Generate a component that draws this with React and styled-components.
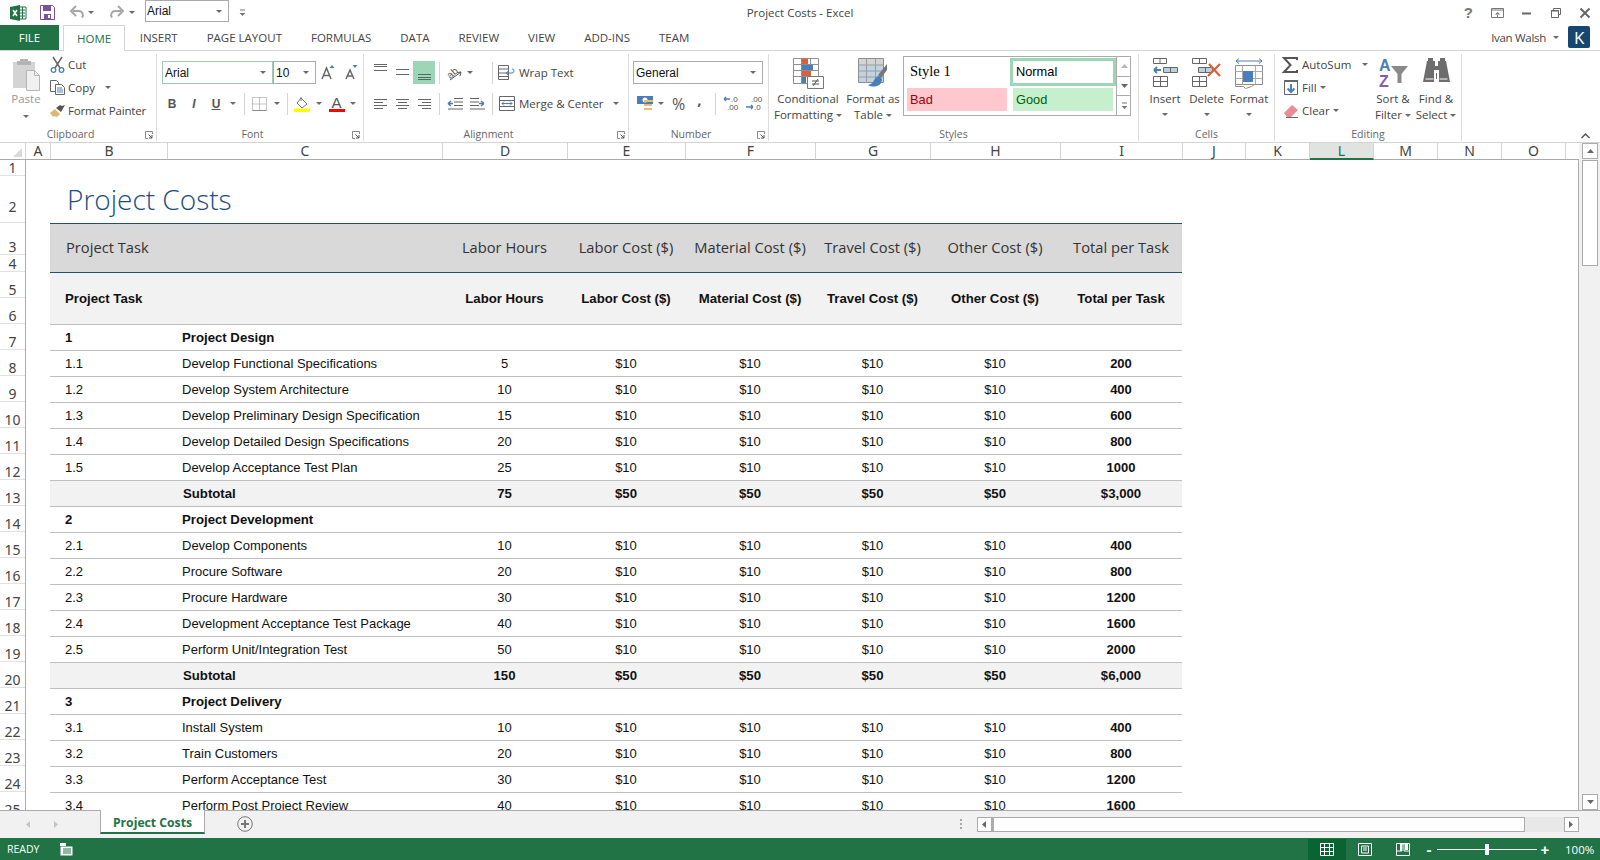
import React from "react";
import styled, { createGlobalStyle } from "styled-components";

const UI = `"Open Sans", "Noto Sans", sans-serif`;
const GREEN = "#217346";
const BLUE = "#4a7ebb";
const GREY = "#6a6a6a";
const COLS = "117px 275px 125px 118px 130px 115px 130px 122px";

const GlobalStyle = createGlobalStyle`
  html, body { margin: 0; padding: 0; background: #fff; }
  body { font-family: ${UI}; color: #444; overflow: hidden; }
  * { box-sizing: border-box; }
`;

/* ---------- shell ---------- */
const Window = styled.div`
  width: 1600px;
  height: 860px;
  display: flex;
  flex-direction: column;
  overflow: hidden;
`;

const TitleBar = styled.div`
  height: 25px;
  display: grid;
  grid-template-columns: 1fr auto 1fr;
  align-items: center;
`;
const Quick = styled.div`
  display: flex;
  align-items: center;
  padding-left: 10px;
`;
const QuickFont = styled.div`
  width: 84px;
  height: 22px;
  margin: -3px 0 0 0;
  border: 1px solid #ababab;
  display: flex;
  align-items: center;
  justify-content: space-between;
  padding: 0 6px 0 1px;
  font: 12px "Liberation Sans", sans-serif;
  color: #111;
`;
const WindowTitle = styled.div`
  font-size: 11.5px;
  color: #444;
`;
const WindowButtons = styled.div`
  display: flex;
  justify-content: flex-end;
  align-items: center;
  padding-right: 10px;
`;
const HelpMark = styled.span`
  font: bold 15px "Liberation Sans", sans-serif;
  color: #777;
  margin-right: 18px;
`;

const TabStrip = styled.div`
  height: 26px;
  display: flex;
  align-items: stretch;
  border-bottom: 1px solid #d4d4d4;
`;
const FileTab = styled.div`
  width: 59px;
  height: 25px;
  background: ${GREEN};
  color: #fff;
  font-size: 11.5px;
  display: flex;
  align-items: center;
  justify-content: center;
  margin-right: 4px;
`;
const Tab = styled.div`
  height: ${(p) => (p.$active ? "26px" : "25px")};
  padding: 0 ${(p) => (p.$active ? "13px" : "14.5px")} 1px;
  display: flex;
  align-items: center;
  font-size: 11.5px;
  color: ${(p) => (p.$active ? GREEN : "#444")};
  background: #fff;
  border: ${(p) => (p.$active ? "1px solid #d4d4d4" : "none")};
  border-bottom: none;
`;
const User = styled.div`
  margin-left: auto;
  display: flex;
  align-items: center;
  font-size: 11.5px;
  letter-spacing: -0.3px;
  padding: 0 10px 1px 0;
`;
const Avatar = styled.div`
  width: 22px;
  height: 22px;
  border-radius: 2px;
  background: #17466f;
  color: #fff;
  font-size: 17px;
  display: flex;
  align-items: center;
  justify-content: center;
  margin-left: 9px;
`;

/* ---------- ribbon ---------- */
const Ribbon = styled.div`
  height: 92px;
  display: flex;
  position: relative;
  border-bottom: 1px solid #d4d4d4;
  padding: 3px 0 1px;
`;
const Group = styled.section`
  width: ${(p) => p.$w}px;
  flex: none;
  position: relative;
  border-right: 1px solid #dcdcdc;
  padding-left: ${(p) => p.$pad || 0}px;
  display: flex;
  flex-direction: column;
`;
const GroupBody = styled.div`
  flex: 1;
  display: flex;
  align-items: flex-start;
`;
const GroupLabel = styled.div`
  position: absolute;
  left: 0;
  right: ${(p) => (p.$launch ? "15px" : "0")};
  bottom: 0;
  height: 14px;
  line-height: 14px;
  text-align: center;
  font-size: 10.5px;
  color: #666;
`;
const Launcher = styled.span`
  position: absolute;
  right: 3px;
  bottom: 2px;
  line-height: 0;
`;
const Stack = styled.div`
  display: flex;
  flex-direction: column;
  width: ${(p) => (p.$w ? `${p.$w}px` : "auto")};
  margin-left: ${(p) => p.$ml || 0}px;
  margin-top: ${(p) => p.$mt || 0}px;
`;
const ToolRow = styled.div`
  height: 23px;
  margin-top: ${(p) => p.$mt || 0}px;
  display: flex;
  align-items: center;
`;
const Slot = styled.span`
  width: ${(p) => p.$w}px;
  height: 23px;
  flex: none;
  display: flex;
  align-items: center;
  justify-content: center;
  margin-left: ${(p) => p.$ml || 0}px;
  background: ${(p) => (p.$on ? "#9fd5b7" : "transparent")};
`;
const Divider = styled.span`
  width: 1px;
  height: 22px;
  background: #d4d4d4;
`;
const Caret = styled.span`
  display: inline-block;
  flex: none;
  width: 0;
  height: 0;
  border-left: 3px solid transparent;
  border-right: 3px solid transparent;
  border-top: 3px solid ${GREY};
  margin-left: ${(p) => p.$ml || 0}px;
  margin-top: ${(p) => p.$mt || 0}px;
  vertical-align: middle;
`;
const Select = styled.div`
  width: ${(p) => p.$w}px;
  height: 23px;
  flex: none;
  border: 1px solid ${(p) => (p.$on ? "#9fc9b1" : "#ababab")};
  padding: 0 6px 0 2px;
  display: flex;
  align-items: center;
  justify-content: space-between;
  font: 12px "Liberation Sans", sans-serif;
  color: #111;
`;
const FontFace = styled.span`
  font: ${(p) => (p.$i ? "italic bold" : "bold")} 12px "Liberation Sans", sans-serif;
  color: #555;
  text-decoration: ${(p) => (p.$u ? "underline" : "none")};
`;
const ColourLetter = styled.span`
  display: flex;
  flex-direction: column;
  align-items: center;
  font: 15px/13px "Liberation Sans", sans-serif;
  color: #555;
  &::after {
    content: "";
    width: 16px;
    height: 3px;
    background: #ff0000;
  }
`;
const Glyph = styled.span`
  font: ${(p) => p.$size || 15}px "Open Sans", sans-serif;
  font-weight: ${(p) => p.$weight || 400};
  color: #555;
  margin-bottom: ${(p) => p.$mb || 0}px;
`;
const BigButton = styled.div`
  width: ${(p) => p.$w}px;
  flex: none;
  margin-left: ${(p) => p.$ml || 0}px;
  display: flex;
  flex-direction: column;
  align-items: center;
  font-size: 11.5px;
  line-height: 16px;
  color: ${(p) => (p.$dim ? "#9a9a9a" : "#444")};
  white-space: nowrap;
`;
const BigIcon = styled.div`
  height: 37px;
  padding-top: 4px;
  display: flex;
  justify-content: center;
`;
const ListButton = styled.div`
  height: 23px;
  display: flex;
  align-items: center;
  font-size: 11.5px;
  letter-spacing: ${(p) => p.$tight || 0}px;
  color: #444;
  white-space: nowrap;
`;
const ListIcon = styled.span`
  width: ${(p) => p.$w || 15}px;
  flex: none;
  margin-right: ${(p) => p.$gap || 4}px;
  display: flex;
  justify-content: center;
`;
const WideButton = styled.div`
  display: flex;
  align-items: center;
  font-size: 11.5px;
  color: #444;
  white-space: nowrap;
`;
const Gallery = styled.div`
  width: 228px;
  height: 60px;
  margin-top: 2px;
  border: 1px solid #ababab;
  display: flex;
`;
const StyleGrid = styled.div`
  flex: 1;
  padding: 1px 0 0 3px;
  display: grid;
  grid-template-columns: 100px 106px;
  grid-template-rows: 28px 23px;
  column-gap: 3px;
  row-gap: 2px;
`;
const StyleCell = styled.div`
  font: ${(p) => (p.$serif ? `14.5px "Liberation Serif", serif` : `12.8px "Liberation Sans", sans-serif`)};
  background: ${(p) => p.$bg || "transparent"};
  color: ${(p) => p.$fg || "#000"};
  border: ${(p) => (p.$framed ? "3px solid #9fd5b7" : "none")};
  margin: ${(p) => (p.$inset ? "0 3px" : "0")};
  padding: 0 0 1px 3px;
  display: flex;
  align-items: center;
`;
const GalleryScroll = styled.div`
  width: 15px;
  flex: none;
  display: flex;
  flex-direction: column;
  border-left: 1px solid #ababab;
`;
const GalleryStep = styled.div`
  flex: 1;
  display: flex;
  align-items: center;
  justify-content: center;
  border-bottom: ${(p) => (p.$last ? "none" : "1px solid #ababab")};
`;
const Collapse = styled.span`
  position: absolute;
  right: 10px;
  bottom: 3px;
  line-height: 0;
`;

/* ---------- sheet ---------- */
const ColumnBar = styled.div`
  height: 17px;
  display: flex;
`;
const ColumnTrack = styled.div`
  width: 1579px;
  flex: none;
  display: flex;
  border-bottom: 1px solid #ababab;
`;
const ScrollCap = styled.div`
  flex: 1;
  background: #f1f1f1;
  padding-left: 3px;
`;
const Corner = styled.div`
  width: 26px;
  flex: none;
  display: flex;
  align-items: flex-end;
  justify-content: flex-end;
  padding: 0 3px 2px 0;
  border-right: 1px solid #d4d4d4;
`;
const ColumnHead = styled.div`
  width: ${(p) => p.$w}px;
  flex: none;
  text-align: center;
  font: 14px/16px "Noto Sans", sans-serif;
  color: ${(p) => (p.$on ? GREEN : "#444")};
  background: ${(p) => (p.$on ? "#e1e3e1" : "#fff")};
  border-right: 1px solid #d4d4d4;
  border-bottom: ${(p) => (p.$on ? `2px solid ${GREEN}` : "none")};
  height: ${(p) => (p.$on ? "17px" : "16px")};
`;
const SheetArea = styled.div`
  height: 651px;
  display: flex;
  overflow: hidden;
  border-bottom: 1px solid #ababab;
`;
const RowHeads = styled.div`
  width: 26px;
  flex: none;
  border-right: 1px solid #ababab;
`;
const RowHead = styled.div`
  height: ${(p) => p.$h}px;
  display: flex;
  align-items: flex-end;
  justify-content: center;
  padding-bottom: ${(p) => p.$pb || 0}px;
  font: 14px/14px "Noto Sans", sans-serif;
  color: #444;
  border-bottom: 1px solid #e1e1e1;
`;
const Canvas = styled.div`
  width: 1553px;
  flex: none;
  padding-left: 24px;
  border-right: 1px solid #ababab;
  overflow: hidden;
`;
const SheetTitle = styled.h1`
  margin: 0;
  height: 63px;
  padding: 15px 0 0 17px;
  font: 300 28px/48px "Open Sans", sans-serif;
  color: #1a4e7e;
`;
const Table = styled.div`
  width: 1132px;
`;
const TitleBand = styled.div`
  height: 50px;
  padding-bottom: 2px;
  display: grid;
  grid-template-columns: ${COLS};
  align-items: center;
  background: #d9d9d9;
  border-top: 1px solid #1f4e79;
  border-bottom: 1px solid #1f4e79;
  color: #333;
  font: 400 14.7px "Open Sans", sans-serif;
`;
const HeadBand = styled.div`
  height: 52px;
  display: grid;
  grid-template-columns: ${COLS};
  align-items: center;
  background: #f2f2f2;
  border-bottom: 1px solid #bfbfbf;
  color: #111;
  font: bold 13.2px "Liberation Sans", sans-serif;
`;
const Row = styled.div`
  height: 26px;
  display: grid;
  grid-template-columns: ${COLS};
  align-items: center;
  background: ${(p) => (p.$shade ? "#f2f2f2" : "#fff")};
  border-bottom: 1px solid #bfbfbf;
  color: #111;
  font: ${(p) => (p.$bold ? "bold 13.2px" : "normal 13px")} "Liberation Sans", sans-serif;
`;
const Cell = styled.div`
  text-align: ${(p) => (p.$left ? "left" : "center")};
  padding-left: ${(p) => p.$pad || 0}px;
  grid-column: ${(p) => (p.$wide ? "span 2" : "auto")};
  font-weight: ${(p) => (p.$bold ? "bold" : "inherit")};
  white-space: nowrap;
`;
const VScroll = styled.div`
  flex: 1;
  background: #f1f1f1;
  padding-left: 3px;
  display: flex;
  flex-direction: column;
`;
const ScrollBtn = styled.div`
  width: ${(p) => p.$w || 16}px;
  height: ${(p) => p.$h || 16}px;
  flex: none;
  background: #fff;
  border: 1px solid #ababab;
  display: flex;
  align-items: center;
  justify-content: center;
`;
const VThumb = styled.div`
  width: 16px;
  height: 106px;
  background: #fff;
  border: 1px solid #ababab;
`;
const Filler = styled.span`
  flex: 1;
`;

/* ---------- bottom ---------- */
const SheetTabs = styled.div`
  height: 27px;
  background: #f1f1f1;
  display: flex;
  align-items: flex-start;
`;
const TabNav = styled.div`
  width: 100px;
  height: 27px;
  display: flex;
  align-items: center;
  padding-left: 26px;
  gap: 23px;
`;
const SheetTab = styled.div`
  width: 105px;
  height: 24px;
  margin-top: -1px;
  padding-top: 3px;
  background: #fff;
  border-left: 1px solid #ababab;
  border-right: 1px solid #ababab;
  border-bottom: 2px solid ${GREEN};
  color: ${GREEN};
  font-size: 12.2px;
  font-weight: 700;
  display: flex;
  align-items: center;
  justify-content: center;
`;
const AddSheet = styled.div`
  margin: 5px 0 0 32px;
  line-height: 0;
`;
const Dots = styled.div`
  margin: 8px 0 0 auto;
  width: 2px;
  height: 10px;
  background: repeating-linear-gradient(#a8a8a8 0 2px, transparent 2px 4px);
`;
const HScroll = styled.div`
  width: 602px;
  height: 15px;
  margin: 6px 21px 0 15px;
  background: #e8e8e8;
  display: flex;
`;
const HThumb = styled.div`
  width: 533px;
  background: #fff;
  border: 1px solid #ababab;
  border-left: 2px solid #ababab;
`;
const StatusBar = styled.div`
  height: 22px;
  background: ${GREEN};
  color: #fff;
  display: flex;
  align-items: center;
  font-size: 10.5px;
  padding-left: 7px;
`;
const ViewButton = styled.div`
  width: ${(p) => p.$w}px;
  height: 21px;
  margin-top: 1px;
  display: flex;
  align-items: center;
  justify-content: center;
  background: ${(p) => (p.$on ? "#0a6332" : "transparent")};
`;
const Zoom = styled.div`
  width: 100px;
  height: 1px;
  background: #fff;
  position: relative;
  margin: 0 1px;
`;
const ZoomThumb = styled.span`
  position: absolute;
  left: 48px;
  top: -5px;
  width: 4px;
  height: 11px;
  background: #fff;
`;
const ZoomSign = styled.span`
  font: bold 15px "Liberation Sans", sans-serif;
  color: #fff;
  width: ${(p) => p.$w}px;
  text-align: center;
`;
const ZoomLevel = styled.span`
  width: 35px;
  margin-left: 13px;
  font-size: 11.5px;
`;

/* ---------- drawings ---------- */
const Svg = ({ w, h, children }) => (
  <svg width={w} height={h} viewBox={`0 0 ${w} ${h}`} fill="none" style={{ display: "block", overflow: "visible" }}>
    {children}
  </svg>
);

const ExcelLogo = () => (
  <Svg w={17} h={16}>
    <path d="M9 2h7v12H9z" fill="#fff" stroke={GREEN} />
    <path d="M10 5h5M10 8h5M10 11h5M12.500 2v12" stroke={GREEN} />
    <path d="M0 2l10-2v16L0 14z" fill={GREEN} />
    <path d="M3 5l4 6M7 5l-4 6" stroke="#fff" strokeWidth="1.500" />
  </Svg>
);
const SaveIcon = () => (
  <Svg w={15} h={15}>
    <path d="M.5.5h12l2 2v12H.5z" stroke="#7d4f9e" fill="#fff" />
    <path d="M3 1h8v5H3z" fill="#7d4f9e" />
    <path d="M4 9h7v5.500H4z" fill="#7d4f9e" />
    <path d="M8 10h2v3H8z" fill="#fff" />
  </Svg>
);
const Undo = ({ flip }) => (
  <Svg w={15} h={13}>
    <g transform={flip ? "translate(15 0) scale(-1 1)" : undefined}>
      <path d="M3 5h6a4 4 0 0 1 3 6.500" stroke="#a6a6a6" strokeWidth="2" />
      <path d="M6 0L1 5l5 5" stroke="#a6a6a6" strokeWidth="2" />
    </g>
  </Svg>
);
const Customize = () => (
  <Svg w={7} h={8}>
    <path d="M1 1h5" stroke="#777" />
    <path d="M.5 4h6l-3 3z" fill="#777" />
  </Svg>
);
const RibbonOpts = () => (
  <Svg w={13} h={10}>
    <path d="M.5.5h12v9H.5z" stroke="#777" />
    <path d="M1 2h11" stroke="#777" />
    <path d="M6.500 4l-2.500 2.500h5zM6 6h1v3H6z" fill="#777" />
  </Svg>
);
const MinIcon = () => (
  <Svg w={9} h={9}>
    <path d="M0 5.500h9" stroke="#666" strokeWidth="2" />
  </Svg>
);
const RestoreIcon = () => (
  <Svg w={10} h={10}>
    <path d="M2.500 2.500v-2h7v6h-2M.5 2.500h7v7h-7z" stroke="#666" />
    <path d="M0 3h8" stroke="#666" />
  </Svg>
);
const CloseIcon = () => (
  <Svg w={10} h={10}>
    <path d="M.5.500l9 9M9.500.5l-9 9" stroke="#666" strokeWidth="2" />
  </Svg>
);
const PasteIcon = () => (
  <Svg w={28} h={33}>
    <path d="M1 4h22v26H1z" fill="#d4d4d4" />
    <path d="M8 1h8v2h3v4H5V3h3z" fill="#b5b5b5" />
    <path d="M14.500 12.500h8l5 5v15h-13z" fill="#f0f0f0" stroke="#b5b5b5" />
    <path d="M22.500 12.500v5h5" stroke="#b5b5b5" />
  </Svg>
);
const ScissorsIcon = () => (
  <Svg w={15} h={16}>
    <path d="M3 0l7 11M12 0L5 11" stroke="#666" strokeWidth="1.500" />
    <circle cx="3.500" cy="13" r="2.300" stroke={BLUE} strokeWidth="1.300" />
    <circle cx="11.500" cy="13" r="2.300" stroke={BLUE} strokeWidth="1.300" />
  </Svg>
);
const CopyIcon = () => (
  <Svg w={15} h={15}>
    <path d="M.5.5h6l2 2v9H.5z" fill="#fff" stroke="#666" />
    <path d="M5.500 4.500h6l3 3v7h-9z" fill="#fff" stroke="#666" />
    <path d="M7 8h5M7 10h6M7 12h6" stroke={BLUE} />
  </Svg>
);
const PainterIcon = () => (
  <Svg w={16} h={14}>
    <path d="M0 9l5-4 5 5-3 3-3-1-1 1z" fill="#e0b676" />
    <path d="M6 4l4-3 2 1 3-1-4 7z" fill="#555" />
  </Svg>
);
const GrowA = ({ big }) => (
  <Svg w={14} h={15}>
    <path
      d={big ? "M1 14L5.500 3 10 14M2.500 10.500h6" : "M2 14l4-9 4 9M3.500 11h5"}
      stroke="#666"
      strokeWidth="1.500"
    />
    <path d={big ? "M8.500 3l2.500-3 2.500 3z" : "M8.500 0h5L11 3z"} fill={BLUE} />
  </Svg>
);
const BorderIcon = () => (
  <Svg w={15} h={14}>
    <path
      d="M.5.5h14v13H.5zM7.500.5v13M.5 7h14"
      stroke="#8a8a8a"
      strokeDasharray="1 1"
    />
    <path d="M.5 13.500h14" stroke="#8a8a8a" />
  </Svg>
);
const BucketIcon = () => (
  <Svg w={16} h={16}>
    <path d="M7 2l6 6-5 4-5-5z" fill="#fff" stroke="#777" />
    <path d="M7 1v4" stroke="#777" />
    <path d="M0 12.500h16V16H0z" fill="#ffff00" />
  </Svg>
);
const Lines = ({ rows, on, h = 15 }) => {
  // rows: [y, x1, x2]
  const c = on ? "#4f6d5d" : "#666";
  return (
    <Svg w={15} h={h}>
      {rows.map(([y, a, b]) => (
        <path key={y} d={`M${a} ${y + 0.5}H${b}`} stroke={c} />
      ))}
    </Svg>
  );
};
const V_TOP = [[1, 1, 14], [3, 1, 14], [7, 1, 14]];
const V_MID = [[6, 1, 14], [11, 1, 14]];
const V_BOT = [[11, 1, 14], [14, 1, 14], [16, 1, 14]];
const H_LEFT = [[3, 1, 14], [6, 1, 10], [9, 1, 14], [12, 1, 10]];
const H_CENTER = [[3, 1, 14], [6, 3, 12], [9, 1, 14], [12, 3, 12]];
const H_RIGHT = [[3, 1, 14], [6, 5, 14], [9, 1, 14], [12, 5, 14]];
const OrientIcon = () => (
  <Svg w={17} h={16}>
    <text x="0" y="11" transform="rotate(-40 6 8)" fontSize="10" fontFamily="Liberation Sans" fill="#555">ab</text>
    <path d="M3 15l11-8M14 7l-4 .5M14 7l-1 4" stroke="#555" />
  </Svg>
);
const IndentIcon = ({ out }) => (
  <Svg w={16} h={13}>
    <path d={out ? "M7 1.500h9M7 5h9M7 8.500h9M1 12h15" : "M1 1.500h9M1 5h9M1 8.500h9M1 12h15"} stroke="#666" />
    <path d={out ? "M6 6.500H1M1 6.500l3-2.500M1 6.500l3 2.500" : "M10 6.500h5M15 6.500l-3-2.500M15 6.500l-3 2.500"} stroke={BLUE} strokeWidth="1.500" />
  </Svg>
);
const WrapIcon = () => (
  <Svg w={17} h={15}>
    <path d="M.5.5h10v14H.5zM.5 4h10M.5 8h10M.5 11.500h10" stroke="#666" />
    <path d="M8 8h6a1.500 1.500 0 0 0 0-4" stroke={BLUE} />
    <path d="M11 5.500L8 8l3 2.500" stroke={BLUE} />
  </Svg>
);
const MergeIcon = () => (
  <Svg w={16} h={15}>
    <path d="M.5.5h15v14H.5zM.5 4.500h15M.5 10.500h15" stroke="#666" />
    <path d="M3 7.500h10M3 7.500l2-2M3 7.500l2 2M13 7.500l-2-2M13 7.500l-2 2" stroke={BLUE} />
  </Svg>
);
const CurrencyIcon = () => (
  <Svg w={17} h={16}>
    <path d="M0 0h16v8H0z" fill={BLUE} />
    <circle cx="8" cy="4" r="2.500" fill="#fff" />
    <path d="M7 4h9v2H7zM7 8h8v2H7zM7 12h8v2H7z" fill="#e7bd70" />
  </Svg>
);
const DecimalIcon = ({ more }) => (
  <Svg w={16} h={15}>
    <text x={more ? 8 : 6} y="6" fontSize="8" fontFamily="Liberation Sans" fill="#555">{more ? ".0" : ".00"}</text>
    <text x={more ? 4 : 9} y="14" fontSize="8" fontFamily="Liberation Sans" fill="#555">{more ? ".00" : ".0"}</text>
    <path d={more ? "M1 3h6M1 3l2-2M1 3l2 2" : "M1 11h7M8 11l-2-2M8 11l-2 2"} stroke={BLUE} strokeWidth="1.300" />
  </Svg>
);
const CondFormat = () => (
  <Svg w={31} h={31}>
    <path d="M.5.500h25v25H.5zM.5 6.500h25M.5 12.500h25M.5 18.500h25M8.500.5v25M17.500.5v25" stroke="#8f8f8f" />
    <path d="M9 1h6v5H9z" fill="#d9603b" />
    <path d="M9 7h11v5H9z" fill={BLUE} />
    <path d="M9 13h9v5H9z" fill="#d9603b" />
    <path d="M9 19h4v6H9z" fill={BLUE} />
    <path d="M14.500 18.500h16v12h-16z" fill="#fff" stroke="#777" />
    <path d="M19 23h7M19 26h7M25 21l-5 7" stroke="#555" />
  </Svg>
);
const TableFormat = () => (
  <Svg w={30} h={30}>
    <path d="M.5.5h25v24H.5z" fill="#fff" stroke="#8f8f8f" />
    <path d="M1 1h24v6H1z" fill="#d4d4d4" />
    <path d="M1 7h24v17H1z" fill="#bfd3e1" />
    <path d="M.5 7h25M.5 13h25M.5 19h25M8.500.5v24M17.500.5v24" stroke="#9c9c9c" />
    <path d="M29 6L20 17l3 3 6-8z" fill="#777" />
    <path d="M21 18c-6 1-4 8-11 9 5 3 14 2 14-6z" fill={BLUE} />
  </Svg>
);
const InsertIcon = () => (
  <Svg w={26} h={29}>
    <path d="M1.500.5h13v5h-13zM8 .5v5M1.500 18.500h14v10h-14zM8.500 18.500v10M1.500 23.500h14" stroke="#666" />
    <path d="M11.500 9.500h14v5h-14zM18.500 9.500v5" fill="#bcd0de" stroke="#666" />
    <path d="M9 12H2M2 12l3-3M2 12l3 3" stroke={BLUE} strokeWidth="1.800" />
  </Svg>
);
const DeleteIcon = () => (
  <Svg w={30} h={29}>
    <path d="M.5.5h14v5H.5zM7.500.5v5M.5 18.500h14v10H.5zM7.500 18.500v10M.5 23.500h14" stroke="#666" />
    <path d="M6.500 9.500h14v5h-14zM13.500 9.500v5" fill="#bcd0de" stroke="#666" />
    <path d="M17 6l11 12M28 6L16 18" stroke="#d9603b" strokeWidth="2.200" />
  </Svg>
);
const FormatCells = () => (
  <Svg w={28} h={31}>
    <path d="M1 3h26M1 3l3-2.500M1 3l3 2.500M27 3l-3-2.500M27 3l-3 2.500" stroke={BLUE} />
    <path d="M.5 7.500h27v19h-27z" fill="#fff" stroke="#8f8f8f" />
    <path d="M.5 13.500h27M.5 20.500h27M7.500 7.500v19M20.500 7.500v19" stroke="#ababab" />
    <path d="M8 13h10v11H8z" fill={BLUE} />
    <path d="M.5 26.500v2h8l2 2 6-2 3-2" stroke="#8f8f8f" />
  </Svg>
);
const SigmaIcon = () => (
  <Svg w={15} h={16}>
    <path d="M14 3V1H1l6.500 7L1 15h13v-2" stroke="#555" strokeWidth="2" />
  </Svg>
);
const FillDownIcon = () => (
  <Svg w={14} h={15}>
    <path d="M0 0h14v2H0z" fill="#666" />
    <path d="M.5 1.500h13v13H.5z" fill="#fff" stroke="#666" />
    <path d="M7 4v8M3.500 8.500L7 12l3.500-3.500" stroke={BLUE} strokeWidth="2" />
  </Svg>
);
const EraserIcon = () => (
  <Svg w={14} h={14}>
    <path d="M0 9l8-8 6 5-7 7H3z" fill="#e98b95" />
    <path d="M2 13.500h12" stroke="#666" />
  </Svg>
);
const SortFilter = () => (
  <Svg w={30} h={29}>
    <text x="1" y="13" fontSize="16" fontWeight="bold" fontFamily="Liberation Sans" fill={BLUE}>A</text>
    <text x="1" y="29" fontSize="16" fontWeight="bold" fontFamily="Liberation Sans" fill="#8a5cab">Z</text>
    <path d="M13 8h17l-6.500 8v9h-4v-9z" fill="#8a8a8a" />
  </Svg>
);
const Binoculars = () => (
  <Svg w={27} h={24}>
    <path d="M5 0h5v3h2v5h3V3h2V0h5v3h1l4 21H16V12h-5v12H0L4 3h1z" fill="#6d6d6d" />
    <path d="M13 15h1v6h-1z" fill="#6d6d6d" />
    <path d="M2.500 21h8M16.500 21h8" stroke="#fff" />
  </Svg>
);
const LauncherIcon = () => (
  <Svg w={8} h={8}>
    <path d="M.5 3V.5h7V3M.5 .5v7H3" stroke="#8a8a8a" />
    <path d="M3.500 3.500L7 7M7 4v3H4" stroke="#555" />
  </Svg>
);
const Tri = ({ d, c = "#666", w = 7, h = 5 }) => (
  <Svg w={w} h={h}>
    <path d={d} fill={c} />
  </Svg>
);
const Chevron = () => (
  <Svg w={9} h={6}>
    <path d="M.5 5L4.500 1l4 4" stroke="#555" strokeWidth="1.500" />
  </Svg>
);
const PlusCircle = () => (
  <Svg w={16} h={16}>
    <circle cx="8" cy="8" r="7.300" stroke="#777" />
    <path d="M4 8h8M8 4v8" stroke="#777" strokeWidth="2" />
  </Svg>
);
const SheetStatus = () => (
  <Svg w={13} h={13}>
    <path d="M0 0h6v3H0z" fill="#fff" />
    <path d="M.5 3.500h12v9H.5z" fill="#fff" />
    <path d="M3 6h8M3 8h8M3 10h8" stroke={GREEN} />
  </Svg>
);
const GridView = () => (
  <Svg w={14} h={13}>
    <path d="M.5.5h13v12H.5zM.5 4.500h13M.5 8.500h13M4.500.5v12M9.500.5v12" stroke="#fff" />
  </Svg>
);
const PageView = () => (
  <Svg w={14} h={13}>
    <path d="M.5.5h13v12H.5z" stroke="#fff" />
    <path d="M3.500 3h7v7h-7zM5 5h4M5 7h4" stroke="#fff" />
  </Svg>
);
const BreakView = () => (
  <Svg w={14} h={13}>
    <path d="M.5.5h13v12H.5z" stroke="#fff" />
    <path d="M1 8h5V1h2v7h5" stroke="#fff" />
    <path d="M4 1h2v7H4zM9 1h3v6H9z" fill="#fff" />
  </Svg>
);

/* ---------- data ---------- */
const COLUMN_WIDTHS = [
  ["A", 25], ["B", 117], ["C", 275], ["D", 125], ["E", 118], ["F", 130], ["G", 115],
  ["H", 130], ["I", 122], ["J", 63], ["K", 64], ["L", 64], ["M", 64], ["N", 64], ["O", 64],
];

const ROW_HEIGHTS = [16, 47, 32, 17, 26, 26];
for (let i = 7; i <= 25; i++) ROW_HEIGHTS.push(26);

const HEADINGS = ["Labor Hours", "Labor Cost ($)", "Material Cost ($)", "Travel Cost ($)", "Other Cost ($)", "Total per Task"];

const SECTIONS = [
  {
    no: "1",
    name: "Project Design",
    tasks: [
      ["1.1", "Develop Functional Specifications", "5", "200"],
      ["1.2", "Develop System Architecture", "10", "400"],
      ["1.3", "Develop Preliminary Design Specification", "15", "600"],
      ["1.4", "Develop Detailed Design Specifications", "20", "800"],
      ["1.5", "Develop Acceptance Test Plan", "25", "1000"],
    ],
    subtotal: ["75", "$3,000"],
  },
  {
    no: "2",
    name: "Project Development",
    tasks: [
      ["2.1", "Develop Components", "10", "400"],
      ["2.2", "Procure Software", "20", "800"],
      ["2.3", "Procure Hardware", "30", "1200"],
      ["2.4", "Development Acceptance Test Package", "40", "1600"],
      ["2.5", "Perform Unit/Integration Test", "50", "2000"],
    ],
    subtotal: ["150", "$6,000"],
  },
  {
    no: "3",
    name: "Project Delivery",
    tasks: [
      ["3.1", "Install System", "10", "400"],
      ["3.2", "Train Customers", "20", "800"],
      ["3.3", "Perform Acceptance Test", "30", "1200"],
      ["3.4", "Perform Post Project Review", "40", "1600"],
    ],
  },
];

const COSTS = [0, 1, 2, 3];

const Section = ({ section }) => (
  <>
    <Row $bold>
      <Cell $left $pad={15}>{section.no}</Cell>
      <Cell $left $pad={15}>{section.name}</Cell>
      <Cell /><Cell /><Cell /><Cell /><Cell /><Cell />
    </Row>
    {section.tasks.map(([no, name, hours, total]) => (
      <Row key={no}>
        <Cell $left $pad={15}>{no}</Cell>
        <Cell $left $pad={15}>{name}</Cell>
        <Cell>{hours}</Cell>
        {COSTS.map((c) => <Cell key={c}>$10</Cell>)}
        <Cell $bold>{total}</Cell>
      </Row>
    ))}
    {section.subtotal && (
      <Row $bold $shade>
        <Cell />
        <Cell $left $pad={16}>Subtotal</Cell>
        <Cell>{section.subtotal[0]}</Cell>
        {COSTS.map((c) => <Cell key={c}>$50</Cell>)}
        <Cell>{section.subtotal[1]}</Cell>
      </Row>
    )}
  </>
);

const App = () => {
  return (
    <Window>
      <GlobalStyle />
      <TitleBar>
        <Quick>
          <Slot $w={17}><ExcelLogo /></Slot>
          <Slot $w={15} $ml={13}><SaveIcon /></Slot>
          <Slot $w={15} $ml={15}><Undo /></Slot>
          <Caret $ml={3} />
          <Slot $w={15} $ml={15}><Undo flip /></Slot>
          <Caret $ml={5} />
          <Slot $w={84} $ml={10}>
            <QuickFont>Arial<Caret /></QuickFont>
          </Slot>
          <Slot $w={7} $ml={10}><Customize /></Slot>
        </Quick>
        <WindowTitle>Project Costs - Excel</WindowTitle>
        <WindowButtons>
          <HelpMark>?</HelpMark>
          <RibbonOpts />
          <Slot $w={9} $ml={18}><MinIcon /></Slot>
          <Slot $w={10} $ml={20}><RestoreIcon /></Slot>
          <Slot $w={10} $ml={19}><CloseIcon /></Slot>
        </WindowButtons>
      </TitleBar>

      <TabStrip>
        <FileTab>FILE</FileTab>
        <Tab $active>HOME</Tab>
        {["INSERT", "PAGE LAYOUT", "FORMULAS", "DATA", "REVIEW", "VIEW", "ADD-INS", "TEAM"].map((t) => (
          <Tab key={t}>{t}</Tab>
        ))}
        <User>
          Ivan Walsh<Caret $ml={7} />
          <Avatar>K</Avatar>
        </User>
      </TabStrip>

      <Ribbon>
        <Group $w={157} $pad={6}>
          <GroupBody>
            <BigButton $w={40} $dim>
              <BigIcon><PasteIcon /></BigIcon>
              Paste
              <Caret $mt={8} />
            </BigButton>
            <Stack $ml={4} $mt={-1}>
              <ListButton><ListIcon $gap={3}><ScissorsIcon /></ListIcon>Cut</ListButton>
              <ListButton><ListIcon $gap={3}><CopyIcon /></ListIcon>Copy<Caret $ml={10} /></ListButton>
              <ListButton $tight={-0.15}><ListIcon $gap={3}><PainterIcon /></ListIcon>Format Painter</ListButton>
            </Stack>
          </GroupBody>
          <GroupLabel $launch>Clipboard</GroupLabel>
          <Launcher><LauncherIcon /></Launcher>
        </Group>

        <Group $w={207} $pad={5}>
          <GroupBody>
            <Stack>
              <ToolRow $mt={7}>
                <Select $w={111} $on>Arial<Caret /></Select>
                <Select $w={43}>10<Caret /></Select>
                <Slot $w={24}><GrowA big /></Slot>
                <Slot $w={22}><GrowA /></Slot>
              </ToolRow>
              <ToolRow $mt={8}>
                <Slot $w={20}><FontFace>B</FontFace></Slot>
                <Slot $w={24}><FontFace $i>I</FontFace></Slot>
                <Slot $w={20}><FontFace $u>U</FontFace></Slot>
                <Slot $w={14}><Caret /></Slot>
                <Slot $w={8}><Divider /></Slot>
                <Slot $w={22}><BorderIcon /></Slot>
                <Slot $w={13}><Caret /></Slot>
                <Slot $w={8}><Divider /></Slot>
                <Slot $w={22}><BucketIcon /></Slot>
                <Slot $w={12}><Caret /></Slot>
                <Slot $w={23}><ColourLetter>A</ColourLetter></Slot>
                <Slot $w={10}><Caret /></Slot>
              </ToolRow>
            </Stack>
          </GroupBody>
          <GroupLabel $launch>Font</GroupLabel>
          <Launcher><LauncherIcon /></Launcher>
        </Group>

        <Group $w={265} $pad={6}>
          <GroupBody>
            <Stack>
              <ToolRow $mt={7}>
                <Slot $w={21}><Lines rows={V_TOP} h={19} /></Slot>
                <Slot $w={22}><Lines rows={V_MID} h={19} /></Slot>
                <Slot $w={22} $on><Lines rows={V_BOT} h={19} on /></Slot>
                <Slot $w={9}><Divider /></Slot>
                <Slot $w={22}><OrientIcon /></Slot>
                <Slot $w={8}><Caret /></Slot>
                <Slot $w={14} />
                <Slot $w={9}><Divider /></Slot>
                <WideButton>
                  <ListIcon $w={19} $gap={3}><WrapIcon /></ListIcon>Wrap Text
                </WideButton>
              </ToolRow>
              <ToolRow $mt={8}>
                <Slot $w={21}><Lines rows={H_LEFT} /></Slot>
                <Slot $w={22}><Lines rows={H_CENTER} /></Slot>
                <Slot $w={22}><Lines rows={H_RIGHT} /></Slot>
                <Slot $w={9}><Divider /></Slot>
                <Slot $w={22}><IndentIcon out /></Slot>
                <Slot $w={22}><IndentIcon /></Slot>
                <Slot $w={9}><Divider /></Slot>
                <WideButton>
                  <ListIcon $w={19} $gap={3}><MergeIcon /></ListIcon>Merge &amp; Center
                  <Caret $ml={9} />
                </WideButton>
              </ToolRow>
            </Stack>
          </GroupBody>
          <GroupLabel $launch>Alignment</GroupLabel>
          <Launcher><LauncherIcon /></Launcher>
        </Group>

        <Group $w={140} $pad={4}>
          <GroupBody>
            <Stack>
              <ToolRow $mt={7}>
                <Select $w={130}>General<Caret /></Select>
              </ToolRow>
              <ToolRow $mt={8}>
                <Slot $w={24}><CurrencyIcon /></Slot>
                <Slot $w={8}><Caret /></Slot>
                <Slot $w={27}><Glyph $size={16}>%</Glyph></Slot>
                <Slot $w={15}><Glyph $size={15} $weight={700} $mb={9}>,</Glyph></Slot>
                <Slot $w={16}><Divider /></Slot>
                <Slot $w={16}><DecimalIcon more /></Slot>
                <Slot $w={16} $ml={6}><DecimalIcon /></Slot>
              </ToolRow>
            </Stack>
          </GroupBody>
          <GroupLabel $launch>Number</GroupLabel>
          <Launcher><LauncherIcon /></Launcher>
        </Group>

        <Group $w={370} $pad={5}>
          <GroupBody>
            <BigButton $w={68}>
              <BigIcon><CondFormat /></BigIcon>
              Conditional
              <span>Formatting <Caret /></span>
            </BigButton>
            <BigButton $w={60} $ml={1}>
              <BigIcon><TableFormat /></BigIcon>
              Format as
              <span>Table <Caret /></span>
            </BigButton>
            <Gallery>
              <StyleGrid>
                <StyleCell $serif>Style 1</StyleCell>
                <StyleCell $framed>Normal</StyleCell>
                <StyleCell $bg="#ffc7ce" $fg="#9c0006">Bad</StyleCell>
                <StyleCell $bg="#c6efce" $fg="#006100" $inset>Good</StyleCell>
              </StyleGrid>
              <GalleryScroll>
                <GalleryStep><Tri d="M3.500 0L7 4H0z" c="#b5b5b5" /></GalleryStep>
                <GalleryStep><Tri d="M0 0h7L3.500 4z" /></GalleryStep>
                <GalleryStep $last><Customize /></GalleryStep>
              </GalleryScroll>
            </Gallery>
          </GroupBody>
          <GroupLabel>Styles</GroupLabel>
        </Group>

        <Group $w={136} $pad={6}>
          <GroupBody>
            <BigButton $w={40}>
              <BigIcon><InsertIcon /></BigIcon>
              Insert
              <Caret $mt={6} />
            </BigButton>
            <BigButton $w={41} $ml={1}>
              <BigIcon><DeleteIcon /></BigIcon>
              Delete
              <Caret $mt={6} />
            </BigButton>
            <BigButton $w={42} $ml={1}>
              <BigIcon><FormatCells /></BigIcon>
              Format
              <Caret $mt={6} />
            </BigButton>
          </GroupBody>
          <GroupLabel>Cells</GroupLabel>
        </Group>

        <Group $w={187} $pad={8}>
          <GroupBody>
            <Stack $w={91} $mt={-1}>
              <ListButton><ListIcon><SigmaIcon /></ListIcon>AutoSum<Caret $ml={11} /></ListButton>
              <ListButton><ListIcon><FillDownIcon /></ListIcon>Fill<Caret $ml={3} /></ListButton>
              <ListButton><ListIcon><EraserIcon /></ListIcon>Clear<Caret $ml={3} /></ListButton>
            </Stack>
            <BigButton $w={38}>
              <BigIcon><SortFilter /></BigIcon>
              Sort &amp;
              <span>Filter <Caret /></span>
            </BigButton>
            <BigButton $w={40} $ml={4}>
              <BigIcon><Binoculars /></BigIcon>
              Find &amp;
              <span>Select <Caret /></span>
            </BigButton>
          </GroupBody>
          <GroupLabel>Editing</GroupLabel>
        </Group>
        <Collapse><Chevron /></Collapse>
      </Ribbon>

      <ColumnBar>
        <ColumnTrack>
          <Corner><Tri d="M9 0v9H0z" c="#d9d9d9" w={9} h={9} /></Corner>
          {COLUMN_WIDTHS.map(([name, w]) => (
            <ColumnHead key={name} $w={w} $on={name === "L"}>{name}</ColumnHead>
          ))}
        </ColumnTrack>
        <ScrollCap><ScrollBtn><Tri d="M3.500 0L7 4H0z" /></ScrollBtn></ScrollCap>
      </ColumnBar>

      <SheetArea>
        <RowHeads>
          {ROW_HEIGHTS.map((h, i) => (
            <RowHead key={i} $h={h} $pb={i === 1 ? 8 : 0}>{i + 1}</RowHead>
          ))}
        </RowHeads>
        <Canvas>
          <SheetTitle>Project Costs</SheetTitle>
          <Table>
            <TitleBand>
              <Cell $left $wide $pad={16}>Project Task</Cell>
              {HEADINGS.map((h) => <Cell key={h}>{h}</Cell>)}
            </TitleBand>
            <HeadBand>
              <Cell $left $wide $pad={15}>Project Task</Cell>
              {HEADINGS.map((h) => <Cell key={h}>{h}</Cell>)}
            </HeadBand>
            {SECTIONS.map((s) => <Section key={s.no} section={s} />)}
          </Table>
        </Canvas>
        <VScroll>
          <VThumb />
          <Filler />
          <ScrollBtn><Tri d="M0 0h7L3.500 4z" /></ScrollBtn>
        </VScroll>
      </SheetArea>

      <SheetTabs>
        <TabNav>
          <Tri d="M4 0v7L0 3.500z" c="#c4c4c4" w={5} h={7} />
          <Tri d="M0 0v7l4-3.500z" c="#c4c4c4" w={5} h={7} />
        </TabNav>
        <SheetTab>Project Costs</SheetTab>
        <AddSheet><PlusCircle /></AddSheet>
        <Dots />
        <HScroll>
          <ScrollBtn $w={15} $h={15}><Tri d="M4 0v7L0 3.500z" w={5} h={7} /></ScrollBtn>
          <HThumb />
          <Filler />
          <ScrollBtn $w={15} $h={15}><Tri d="M0 0v7l4-3.500z" w={5} h={7} /></ScrollBtn>
        </HScroll>
      </SheetTabs>

      <StatusBar>
        READY
        <Slot $w={13} $ml={21}><SheetStatus /></Slot>
        <Filler />
        <ViewButton $w={38} $on><GridView /></ViewButton>
        <ViewButton $w={38}><PageView /></ViewButton>
        <ViewButton $w={38}><BreakView /></ViewButton>
        <ZoomSign $w={14}>-</ZoomSign>
        <Zoom><ZoomThumb /></Zoom>
        <ZoomSign $w={14}>+</ZoomSign>
        <ZoomLevel>100%</ZoomLevel>
      </StatusBar>
    </Window>
  );
};

export default App;
